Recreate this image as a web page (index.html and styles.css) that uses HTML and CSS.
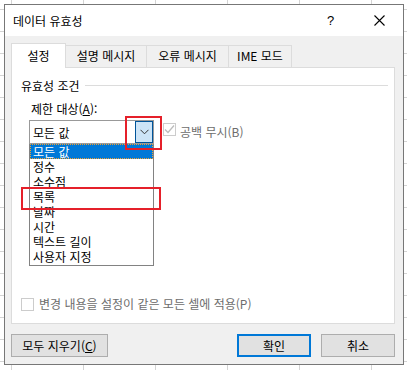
FILE: index.html
```html
<!DOCTYPE html>
<html lang="ko">
<head>
    <meta charset="UTF-8">
    <title>데이터 유효성</title>
    <link rel="stylesheet" href="styles.css">
</head>
<body>

    <div class="dialog">
        <div class="titlebar">
            <span class="title">데이터 유효성</span>
            <span class="help">?</span>
            <span class="close">
                <svg width="11" height="11" viewBox="0 0 11 11"><path d="M0.5 0.5L10.5 10.5M10.5 0.5L0.5 10.5" stroke="#000" stroke-width="1.1"/></svg>
            </span>
        </div>

        <div class="content">
            <div class="tabs">
                <div class="tab active">설정</div>
                <div class="tab t2">설명 메시지</div>
                <div class="tab t3">오류 메시지</div>
                <div class="tab t4">IME 모드</div>
            </div>

            <div class="panel">
                <div class="group-title"><span>유효성 조건</span><span class="rule"></span></div>
                <div class="label">제한 대상(<u>A</u>):</div>

                <div class="combo-row">
                    <div class="combo">
                        <span class="combo-text">모든 값</span>
                        <span class="drop-btn">
                            <svg width="9" height="6" viewBox="0 0 9 6"><path d="M0.5 0.8L4.5 4.8L8.5 0.8" fill="none" stroke="#333" stroke-width="1"/></svg>
                        </span>
                    </div>
                    <span class="check disabled">
                        <svg width="11" height="11" viewBox="0 0 11 11"><path d="M1 5.5L4 8.5L10 1.5" fill="none" stroke="#bcbcbc" stroke-width="1.3"/></svg>
                    </span>
                    <span class="check-label">공백 무시(B)</span>
                </div>

                <ul class="list">
                    <li class="selected">모든 값</li>
                    <li>정수</li>
                    <li>소수점</li>
                    <li>목록</li>
                    <li>날짜</li>
                    <li>시간</li>
                    <li>텍스트 길이</li>
                    <li>사용자 지정</li>
                </ul>

                <div class="apply-row">
                    <span class="check disabled"></span>
                    <span class="check-label">변경 내용을 설정이 같은 모든 셀에 적용(P)</span>
                </div>
            </div>

            <div class="buttons">
                <button class="btn clear">모두 지우기(<u>C</u>)</button>
                <div class="right-buttons">
                    <button class="btn default">확인</button>
                    <button class="btn">취소</button>
                </div>
            </div>
        </div>

        <!-- red highlight marks -->
        <div class="mark mark-drop"></div>
        <div class="mark mark-list"></div>
    </div>

</body>
</html>
```

FILE: styles.css
```css
body {
    margin: 0;
    width: 407px;
    height: 370px;
    overflow: hidden;
    font-family: "Noto Sans CJK KR", "Noto Sans", sans-serif;
    font-size: 12px;
    color: #000;
    background-color: #fff;
    background-image:
        repeating-linear-gradient(to right, transparent 0, transparent 11px, #d4d4d4 11px, #d4d4d4 12px, transparent 12px, transparent 72px),
        repeating-linear-gradient(to bottom, transparent 0, transparent 9px, #d4d4d4 9px, #d4d4d4 10px, transparent 10px, transparent 22px);
}

.dialog { position: relative; margin: 4px; width: 400px; height: 361px; box-sizing: border-box; border: 1px solid #777; background: #f0f0f0; display: flex; flex-direction: column; }

.titlebar { height: 31px; background: #fff; display: flex; align-items: center; padding-left: 8px; }
.title { flex: 1; line-height: 16px; }
.help { width: 10px; margin-right: 37px; line-height: 16px; font-family: "Liberation Sans", sans-serif; font-size: 13px; }
.close { width: 11px; height: 11px; margin-right: 18px; display: flex; }

.content { padding: 7px 0 0 6px; }

.tabs { display: flex; height: 24px; align-items: flex-end; }
.tab { height: 22px; box-sizing: border-box; border: 1px solid #dcdcdc; border-bottom: none; border-left: none; background: #f0f0f0; line-height: 20px; text-align: center; }
.tab.active { height: 25px; width: 55px; margin-bottom: -1px; background: #fff; border-left: 1px solid #dcdcdc; position: relative; z-index: 1; line-height: 24px; }
.tab.t2 { width: 81px; }
.tab.t3 { width: 82px; }
.tab.t4 { width: 63px; }

.panel { width: 384px; height: 257px; box-sizing: border-box; border: 1px solid #dcdcdc; background: #fff; }

.group-title { display: flex; align-items: center; margin: 10px 6px 0 9px; line-height: 16px; }
.group-title .rule { flex: 1; height: 1px; background: #dcdcdc; margin-left: 5px; margin-top: -1px; }

.label { margin: 7px 0 0 19px; line-height: 16px; }

.combo-row { display: flex; align-items: flex-start; margin: 3px 0 0 17px; }
.combo { width: 125px; height: 24px; box-sizing: border-box; border: 1px solid #999; display: flex; align-items: center; justify-content: space-between; padding: 0 0 0 3px; }
.combo-text { line-height: 16px; margin-top: 1px; }
.drop-btn { width: 18px; height: 22px; box-sizing: border-box; border: 1px solid #005499; background: #cce4f7; display: flex; align-items: center; justify-content: center; }

.check { width: 13px; height: 13px; box-sizing: border-box; border: 1px solid #cccccc; background: #fff; display: flex; align-items: center; justify-content: center; }
.combo-row .check { margin: 3px 4px 0 9px; }
.check-label { color: #6d6d6d; line-height: 16px; }
.combo-row .check-label { margin-top: 4px; }

.list { list-style: none; margin: 0 0 0 17px; padding: 0; width: 125px; height: 122px; box-sizing: border-box; border: 1px solid #828282; border-top: none; }
.list li { height: 15px; line-height: 15px; padding-left: 3px; }
.list li.selected { background: #0078d7; color: #fff; outline: 1px dotted #f0a030; outline-offset: -1px; }

.apply-row { display: flex; align-items: center; margin: 30px 0 0 9px; gap: 5px; }

.buttons { display: flex; justify-content: space-between; width: 384px; margin-top: 10px; }
.right-buttons { display: flex; gap: 10px; }
.btn { height: 23px; box-sizing: border-box; border: 1px solid #adadad; background: #e1e1e1; font-family: inherit; font-size: 12px; color: #000; padding: 0; line-height: 16px; }
.btn.clear { width: 97px; }
.right-buttons .btn { width: 74px; }
.btn.default { border: 2px solid #0078d7; }

.mark { position: absolute; border: 2px solid #e5202a; box-sizing: border-box; }
.mark-drop { left: 120px; top: 111px; width: 37px; height: 34px; }
.mark-list { left: 16px; top: 182px; width: 140px; height: 23px; }
```
